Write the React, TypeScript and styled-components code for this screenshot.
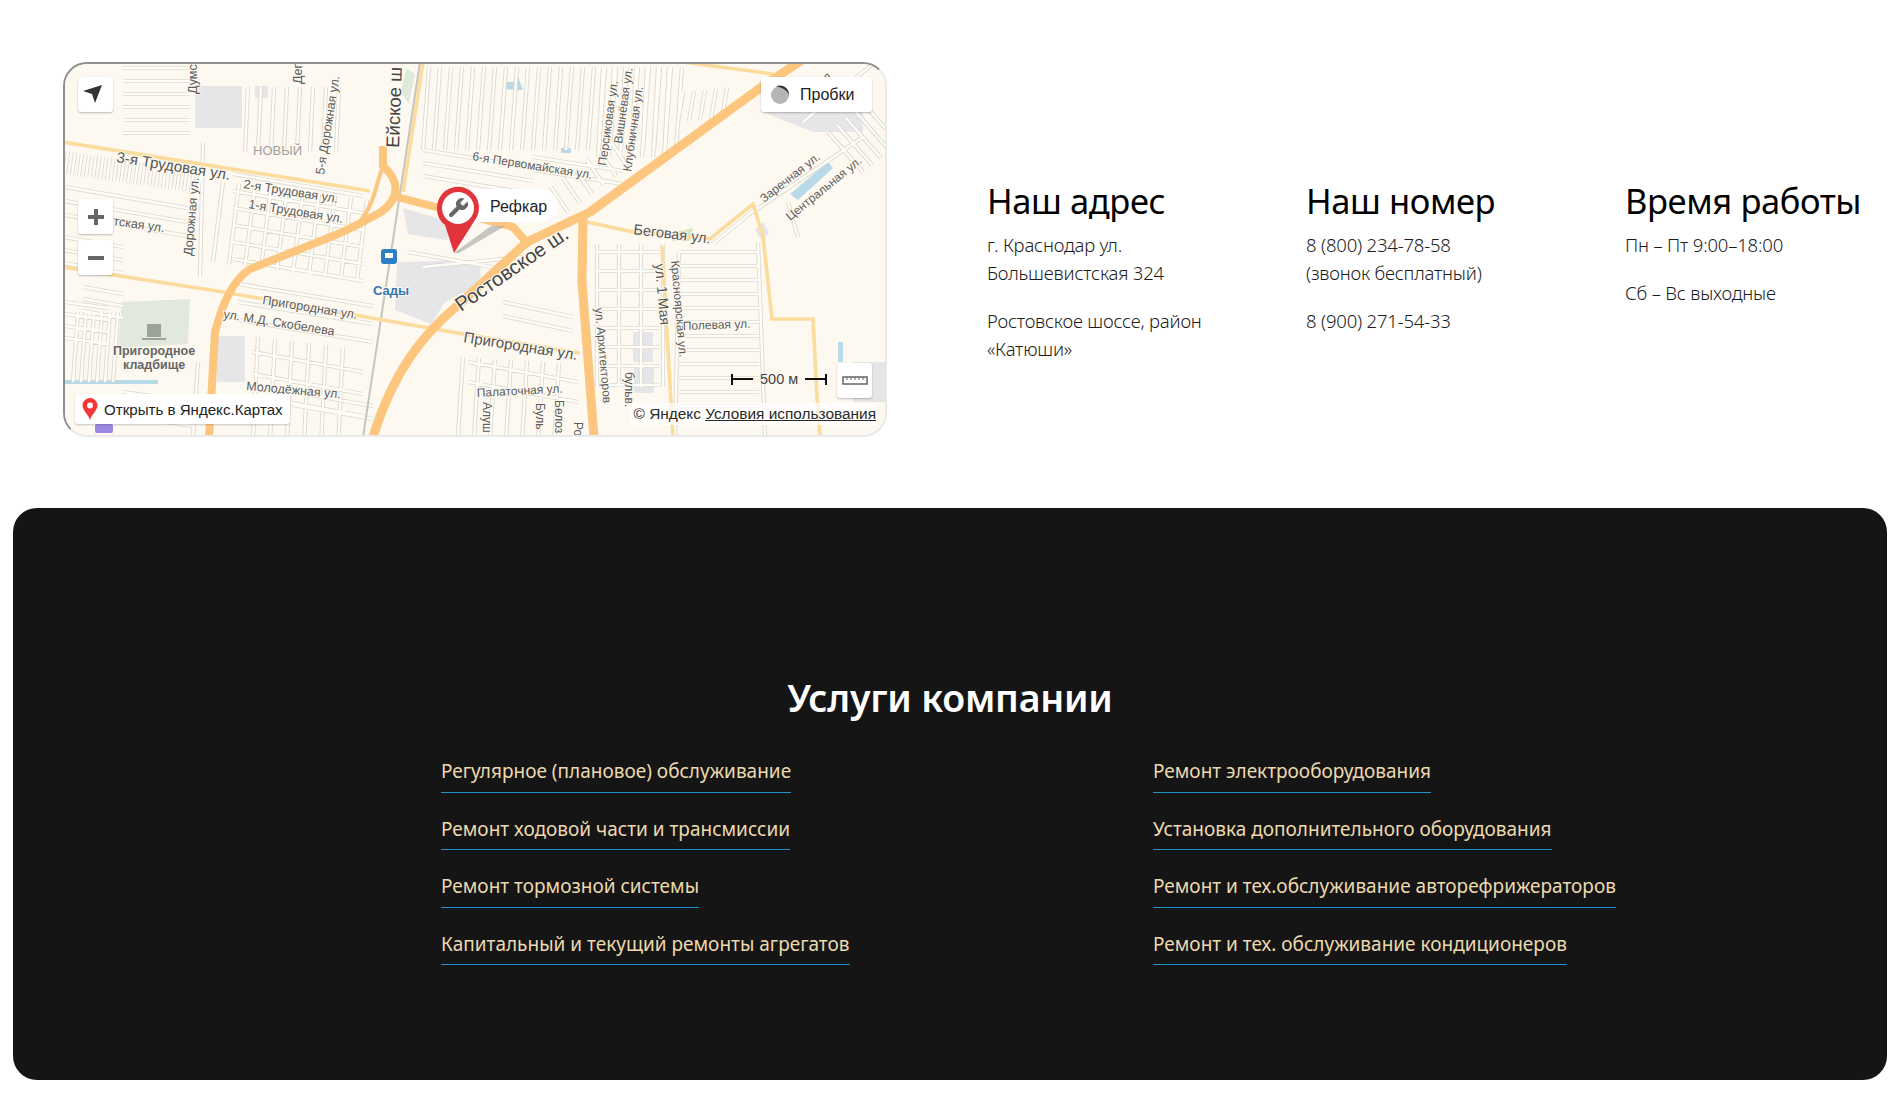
import React, { ReactElement } from 'react'
import styled, { createGlobalStyle } from 'styled-components'

const GlobalStyle = createGlobalStyle`
  html, body {
    margin: 0;
    padding: 0;
    background: #fff;
    font-family: "Noto Sans", "Open Sans", sans-serif;
  }
`

const Page = styled.div`
  width: 1903px;
  height: 1103px;
  overflow: hidden;
  background: #fff;
`

const ContactSection = styled.section`
  display: flex;
  align-items: center;
  gap: 100px;
  padding: 62px 0 0 63px;
`

const MapFrame = styled.div`
  position: relative;
  flex: none;
  width: 824px;
  height: 375px;
  box-sizing: border-box;
  overflow: hidden;
  border-radius: 24px;
  border-style: solid;
  border-width: 2px;
  border-color: #8f8f8f #e9e9e9 #e9e9e9 #8f8f8f;
  background: #fdf9f0;
`

const MapSvg = styled.svg`
  display: block;
  position: absolute;
  left: -2px;
  top: -2px;
  font-family: "Liberation Sans", sans-serif;
`

const ControlButton = styled.div`
  display: flex;
  align-items: center;
  justify-content: center;
  width: 35px;
  height: 35px;
  background: #fff;
  border-radius: 3px;
  box-shadow: 0 1px 2px rgba(0, 0, 0, 0.25);
`

const LocateButton = styled(ControlButton)`
  position: absolute;
  left: 13px;
  top: 13px;
`

const ZoomGroup = styled.div`
  position: absolute;
  left: 13px;
  top: 135px;
  display: flex;
  flex-direction: column;
  gap: 6px;
`

const TrafficButton = styled(ControlButton)`
  position: absolute;
  right: 13px;
  top: 13px;
  width: 111px;
  justify-content: flex-start;
  gap: 10px;
  padding-left: 9px;
  box-sizing: border-box;
  font: 16px "Liberation Sans", sans-serif;
  color: #222;
`

const RulerButton = styled(ControlButton)`
  position: absolute;
  right: 13px;
  top: 299px;
`

const OpenInMaps = styled.div`
  position: absolute;
  left: 10px;
  top: 330px;
  display: flex;
  align-items: center;
  gap: 6px;
  width: 215px;
  height: 30px;
  box-sizing: border-box;
  padding-left: 7px;
  background: #fff;
  border-radius: 3px;
  box-shadow: 0 1px 2px rgba(0, 0, 0, 0.2);
  font: 15.1px "Liberation Sans", sans-serif;
  color: #222;
  white-space: nowrap;
`

const ScaleLine = styled.div`
  position: absolute;
  left: 666px;
  top: 307px;
  display: flex;
  align-items: center;
  gap: 7px;
  font: 14.5px "Liberation Sans", sans-serif;
  color: #444;
`

const ScaleCap = styled.span<{ $side: 'left' | 'right' }>`
  display: block;
  width: 22px;
  height: 11px;
  box-sizing: border-box;
  background: linear-gradient(#111, #111) center / 100% 2px no-repeat;
  border-${(p) => p.$side}: 2px solid #111;
`

const Copyright = styled.div`
  position: absolute;
  right: 9px;
  top: 339px;
  padding: 2px 0 2px 3px;
  background: rgba(255, 255, 255, 0.72);
  font: 15.4px "Liberation Sans", sans-serif;
  color: #2a2a2a;
  white-space: nowrap;
`

const CopyrightLink = styled.span`
  text-decoration: underline;
`

const InfoColumns = styled.div`
  display: grid;
  grid-template-columns: repeat(3, 319px);
  align-self: flex-start;
  margin-top: 114px;
`

const InfoColumn = styled.div`
  display: flex;
  flex-direction: column;
`

const InfoTitle = styled.h3`
  margin: 0 0 5px;
  font-size: 34.5px;
  line-height: 50px;
  font-weight: 400;
  letter-spacing: -0.4px;
  color: #000;
  white-space: nowrap;
`

const InfoText = styled.p`
  margin: 0 0 20px;
  font-size: 18.5px;
  line-height: 28px;
  font-weight: 300;
  letter-spacing: -0.2px;
  color: #1c1c1c;
  white-space: pre-line;
`

const ServicesPanel = styled.section`
  box-sizing: border-box;
  width: 1874px;
  height: 572px;
  margin: 71px 0 0 13px;
  padding: 162px 0 0 428px;
  background: #151515;
  border-radius: 24px;
`

const ServicesTitle = styled.h2`
  margin: 0 0 24px -428px;
  text-align: center;
  font-size: 37.5px;
  line-height: 56px;
  font-weight: 600;
  letter-spacing: -0.2px;
  color: #fff;
`

const ServicesGrid = styled.div`
  display: grid;
  grid-template-columns: repeat(2, 712px);
`

const ServicesColumn = styled.ul`
  display: flex;
  flex-direction: column;
  align-items: flex-start;
  gap: 15px;
  margin: 0;
  padding: 0;
  list-style: none;
`

const ServiceLink = styled.li`
  height: 42.5px;
  box-sizing: border-box;
  padding-top: 7px;
  font-size: 19px;
  line-height: 28px;
  color: #ecd9ae;
  border-bottom: 1px solid #1f8fc6;
  white-space: nowrap;
`

// parallel street segments, n copies shifted by dx/dy
function hatch(x1: number, y1: number, x2: number, y2: number, dx: number, dy: number, n: number): string {
  let d = ''
  for (let i = 0; i < n; i++) {
    d += `M${x1 + dx * i},${y1 + dy * i}L${x2 + dx * i},${y2 + dy * i}`
  }
  return d
}

const minorStreets = [
  hatch(60, 6, 127, 6, 0, 13, 6),
  hatch(5, 90, 2, 112, 7, 1, 20),
  hatch(2, 125, 130, 147, 0, 14, 3),
  hatch(0, 175, 60, 185, 0, 13, 3),
  hatch(140, 80, 137, 215, 48, 0, 1),
  hatch(185, 25, 182, 90, 13, 0, 8),
  hatch(170, 112, 300, 134, 0, 17, 6),
  hatch(160, 120, 150, 200, 16, 2, 10),
  hatch(175, 222, 310, 244, 0, 18, 3),
  hatch(20, 225, 60, 232, 0, 12, 3),
  hatch(15, 250, 10, 320, 8, 0, 6),
  hatch(195, 275, 190, 375, 17, 2, 6),
  hatch(190, 290, 300, 310, 0, 22, 3),
  hatch(230, 330, 310, 344, 0, 13, 2),
  hatch(366, 5, 360, 88, 11, 0, 24),
  hatch(360, 88, 470, 106, 0, 13, 3),
  hatch(470, 108, 560, 122, 0, -13, 2),
  hatch(488, 125, 505, 150, 12, -9, 6),
  hatch(540, 5, 535, 95, 11, 0, 7),
  hatch(620, 30, 615, 60, 11, -1, 5),
  hatch(360, 205, 460, 195, 0, 0, 1),
  hatch(345, 190, 440, 207, 0, 0, 1),
  hatch(440, 240, 510, 255, 0, 14, 2),
  hatch(400, 295, 395, 375, 16, 1, 7),
  hatch(405, 300, 515, 320, 0, 20, 2),
  hatch(534, 182, 534, 325, 22, 0, 4),
  hatch(534, 190, 596, 190, 0, 19, 8),
  hatch(616, 190, 696, 190, 0, 14, 12),
  hatch(616, 190, 612, 375, 0, 0, 1),
  hatch(695, 180, 702, 375, 0, 0, 1),
  hatch(690, 150, 800, 75, 0, 0, 1),
  hatch(765, 70, 800, 110, 9, -7, 5),
  hatch(725, 140, 735, 175, 0, 0, 1),
  hatch(650, 182, 695, 145, 0, 0, 1),
  hatch(740, 60, 812, 0, 0, 0, 1),
  hatch(2, 240, 45, 246, 0, 12, 4),
  hatch(135, 300, 130, 375, 0, 0, 1),
  hatch(60, 330, 130, 340, 0, 12, 3),
].join('')

type LabelProps = { x: number; y: number; r?: number; s?: number; c?: string; w?: number; children: string }

function Label({ x, y, r = 0, s = 12.5, c = '#5c5c5c', w = 400, children }: LabelProps): ReactElement {
  return (
    <text
      transform={`translate(${x} ${y}) rotate(${r})`}
      fontSize={s}
      fontWeight={w}
      fill={c}
      stroke="#fdf9f0"
      strokeWidth={2}
      paintOrder="stroke"
    >
      {children}
    </text>
  )
}

function MapDrawing(): ReactElement {
  return (
    <MapSvg width={824} height={375} viewBox="0 0 824 375">
      <rect width={824} height={375} fill="#fdf9f0" />
      {/* blocks and water */}
      <g fill="#e6e6e9">
        <rect x={132} y={24} width={47} height={42} />
        <rect x={192} y={24} width={13} height={12} />
        <polygon points="340,146 388,160 384,178 345,172" />
        <polygon points="334,200 417,198 418,222 382,240 368,262 332,248" />
        <rect x={154} y={274} width={28} height={46} />
        <polygon points="700,160 706,170 700,180 692,168" />
        <polygon points="700,50 800,50 800,70 750,70" />
        <rect x={570} y={270} width={20} height={30} />
        <rect x={571} y={303} width={20} height={28} />
        <rect x={790} y={300} width={34} height={40} />
      </g>
      <polygon points="59,240 127,237 125,282 55,286" fill="#e2e9dc" />
      <polygon points="343,6 352,12 346,42 338,30" fill="#dfeadb" />
      <polygon points="604,172 630,166 627,179 610,179" fill="#d5e6c0" />
      <g fill="#b7d9e8">
        <polygon points="440,20 452,20 452,6 457,20 460,28 440,27" />
        <rect x={498} y={86} width={10} height={5} />
        <polygon points="727,132 765,100 770,106 735,138" />
        <rect x={2} y={318} width={93} height={4} />
        <rect x={775} y={280} width={5} height={20} />
      </g>
      {/* minor streets, border then fill */}
      <path d={minorStreets} fill="none" stroke="#dcd9cf" strokeWidth={4.2} />
      <path d={minorStreets} fill="none" stroke="#fffdf8" strokeWidth={2.4} />
      <path d="M357,0 L300,375" fill="none" stroke="#c4c4c2" strokeWidth={2} />
      {/* yellow streets */}
      <g fill="none" stroke="#fbdc9d" strokeWidth={3.6}>
        <path d="M0,80 L307,129" />
        <path d="M0,205 L160,230 L400,272 L517,291" />
        <path d="M360,0 L340,130" />
        <path d="M524,160 L570,170 L647,177 L690,142 L700,174 L709,257 L750,257 L754,334 L757,375" />
        <path d="M599,184 L610,375" />
        <path d="M620,0 L710,12" />
      </g>
      {/* orange roads */}
      <g fill="none" stroke="#fcc67e" strokeWidth={8} strokeLinejoin="round">
        <path d="M310,375 C330,310 360,272 394,244 L464,180 L527,150 L700,24 L745,-6" strokeWidth={9} />
        <path d="M520,155 L519,220 L531,375" strokeWidth={9} />
        <path d="M320,84 L320,104 C336,118 338,135 318,150 C300,160 285,168 270,174 L187,207 C170,218 160,240 152,270 L146,375" />
        <path d="M320,104 C312,125 312,140 298,158 L318,150" strokeWidth={4} />
        <path d="M334,135 L400,152 L450,165 L467,184" />
      </g>
      {/* labels */}
      <Label x={134} y={32} r={-90}>Думс</Label>
      <Label x={239} y={22} r={-90}>Деп</Label>
      <Label x={261} y={113} r={-81}>5-я Дорожная ул.</Label>
      <Label x={336} y={86} r={-88} s={18.5} c="#444">Ейское ш</Label>
      <Label x={190} y={93} s={13} c="#a0a0a0">НОВЫЙ</Label>
      <Label x={53} y={100} r={9} s={15} c="#555">3-я Трудовая ул.</Label>
      <Label x={180} y={126} r={9}>2-я Трудовая ул.</Label>
      <Label x={185} y={146} r={9}>1-я Трудовая ул.</Label>
      <Label x={50} y={163} r={8}>тская ул.</Label>
      <Label x={129} y={194} r={-85}>Дорожная ул.</Label>
      <Label x={199} y={242} r={9}>Пригородная ул.</Label>
      <Label x={160} y={256} r={9}>ул. М.Д. Скобелева</Label>
      <Label x={50} y={293} w={700} c="#666">Пригородное</Label>
      <Label x={60} y={307} w={700} c="#666">кладбище</Label>
      <Label x={183} y={328} r={5}>Молодёжная ул.</Label>
      <Label x={398} y={250} r={-34.5} s={20} c="#444">Ростовское ш.</Label>
      <Label x={400} y={280} r={9} s={15} c="#555">Пригородная ул.</Label>
      <Label x={409} y={98} r={9} s={12}>6-я Первомайская ул.</Label>
      <Label x={543} y={104} r={-82} s={12}>Персиковая ул.</Label>
      <Label x={559} y={82} r={-82} s={12}>Вишнёвая ул.</Label>
      <Label x={568} y={110} r={-82} s={12}>Клубничная ул.</Label>
      <Label x={701} y={141} r={-38} s={12}>Заречная ул.</Label>
      <Label x={727} y={159} r={-39} s={12}>Центральная ул.</Label>
      <Label x={570} y={172} r={7} s={14.5} c="#555">Беговая ул.</Label>
      <Label x={592} y={202} r={85} s={14} c="#555">ул. 1 Мая</Label>
      <Label x={608} y={199} r={85} s={12}>Красноярская ул.</Label>
      <Label x={620} y={268} r={-2} s={12}>Полевая ул.</Label>
      <Label x={532} y={246} r={85} s={12}>ул. Архитекторов</Label>
      <Label x={414} y={335} r={-3} s={12}>Палаточная ул.</Label>
      <Label x={420} y={340} r={90} s={12}>Алуш</Label>
      <Label x={473} y={341} r={90} s={12}>Буль</Label>
      <Label x={492} y={338} r={90} s={12}>Белоз</Label>
      <Label x={511} y={360} r={90} s={12}>Ро</Label>
      <Label x={562} y={310} r={90} s={12}>бульв.</Label>
      <Label x={752} y={30} r={-40} s={12}>Сад</Label>
      {/* metro stop */}
      <rect x={318} y={187} width={16} height={15} rx={3} fill="#2b7fc4" />
      <rect x={322} y={191} width={8} height={5} fill="#fff" />
      <Label x={310} y={233} s={13} c="#3477b5" w={700}>Сады</Label>
      <rect x={84} y={262} width={14} height={13} fill="#9aa39a" />
      <rect x={79} y={276} width={24} height={2} fill="#9aa39a" />
      <rect x={32} y={362} width={18} height={9} rx={2} fill="#9b86e0" />
      {/* placemark with caption */}
      <rect x={395} y={127} width={100} height={33} rx={16} fill="#fff" />
      <text x={427} y={150} fontSize={16} fill="#222">Рефкар</text>
      <polygon points="391,191 428,164 442,164 396,191" fill="#9a9a9a" opacity={0.55} />
      <path d="M374,146 A21,21 0 1 1 412,158 L391,191 L382,163 A21,21 0 0 1 374,146 Z" fill="#e1343d" />
      <circle cx={395} cy={146} r={16} fill="#fff" />
      <g transform="translate(383 134)" fill="#666">
        <path d="M14.7 6.3a1 1 0 0 0 0 1.4l1.6 1.6a1 1 0 0 0 1.4 0l3.77-3.77a6 6 0 0 1-7.94 7.94l-6.91 6.91a2.12 2.12 0 0 1-3-3l6.91-6.91a6 6 0 0 1 7.94-7.94l-3.76 3.76z" />
      </g>
    </MapSvg>
  )
}

const services = [
  ['Регулярное (плановое) обслуживание', 'Ремонт ходовой части и трансмиссии', 'Ремонт тормозной системы', 'Капитальный и текущий ремонты агрегатов'],
  ['Ремонт электрооборудования', 'Установка дополнительного оборудования', 'Ремонт и тех.обслуживание авторефрижераторов', 'Ремонт и тех. обслуживание кондиционеров'],
]

export default function App(): ReactElement {
  return (
    <Page>
      <GlobalStyle />
      <ContactSection>
        <MapFrame>
          <MapDrawing />
          <LocateButton>
            <svg width={35} height={35} viewBox="0 0 35 35">
              <polygon points="5,14 24,8 17,26 14,17" fill="#333" />
            </svg>
          </LocateButton>
          <ZoomGroup>
            <ControlButton>
              <svg width={18} height={18} viewBox="0 0 18 18">
                <path d="M7 1h4v6h6v4h-6v6H7v-6H1V7h6z" fill="#666" />
              </svg>
            </ControlButton>
            <ControlButton>
              <svg width={18} height={18} viewBox="0 0 18 18">
                <rect x={1} y={7} width={16} height={4} fill="#666" />
              </svg>
            </ControlButton>
          </ZoomGroup>
          <TrafficButton>
            <svg width={20} height={20} viewBox="0 0 20 20">
              <circle cx={10} cy={10} r={9} fill="#b5b5b5" />
              <path d="M6 1.5 A9 9 0 0 1 19 10 C18 6 12 2 6 1.5Z" fill="#333" />
            </svg>
            Пробки
          </TrafficButton>
          <RulerButton>
            <svg width={26} height={10} viewBox="0 0 26 10">
              <rect x={1} y={1} width={24} height={7} fill="none" stroke="#666" strokeWidth={1.5} />
              <path d="M5 1v3M9 1v3M13 1v3M17 1v3M21 1v3" stroke="#666" />
            </svg>
          </RulerButton>
          <OpenInMaps>
            <svg width={16} height={22} viewBox="0 0 16 22">
              <path d="M8 0a7.5 7.5 0 0 1 7.5 7.5C15.5 12 10 16 8 22 6 16 .5 12 .5 7.5A7.5 7.5 0 0 1 8 0z" fill="#f43636" />
              <circle cx={8} cy={7.5} r={3} fill="#fff" />
            </svg>
            Открыть в Яндекс.Картах
          </OpenInMaps>
          <ScaleLine>
            <ScaleCap $side="left" />
            500 м
            <ScaleCap $side="right" />
          </ScaleLine>
          <Copyright>
            © Яндекс <CopyrightLink>Условия использования</CopyrightLink>
          </Copyright>
        </MapFrame>
        <InfoColumns>
          <InfoColumn>
            <InfoTitle>Наш адрес</InfoTitle>
            <InfoText>{'г. Краснодар ул.\nБольшевистская 324'}</InfoText>
            <InfoText>{'Ростовское шоссе, район\n«Катюши»'}</InfoText>
          </InfoColumn>
          <InfoColumn>
            <InfoTitle>Наш номер</InfoTitle>
            <InfoText>{'8 (800) 234-78-58\n(звонок бесплатный)'}</InfoText>
            <InfoText>8 (900) 271-54-33</InfoText>
          </InfoColumn>
          <InfoColumn>
            <InfoTitle>Время работы</InfoTitle>
            <InfoText>Пн – Пт 9:00–18:00</InfoText>
            <InfoText>Сб – Вс выходные</InfoText>
          </InfoColumn>
        </InfoColumns>
      </ContactSection>
      <ServicesPanel>
        <ServicesTitle>Услуги компании</ServicesTitle>
        <ServicesGrid>
          {services.map((column, i) => (
            <ServicesColumn key={i}>
              {column.map((name) => (
                <ServiceLink key={name}>{name}</ServiceLink>
              ))}
            </ServicesColumn>
          ))}
        </ServicesGrid>
      </ServicesPanel>
    </Page>
  )
}
